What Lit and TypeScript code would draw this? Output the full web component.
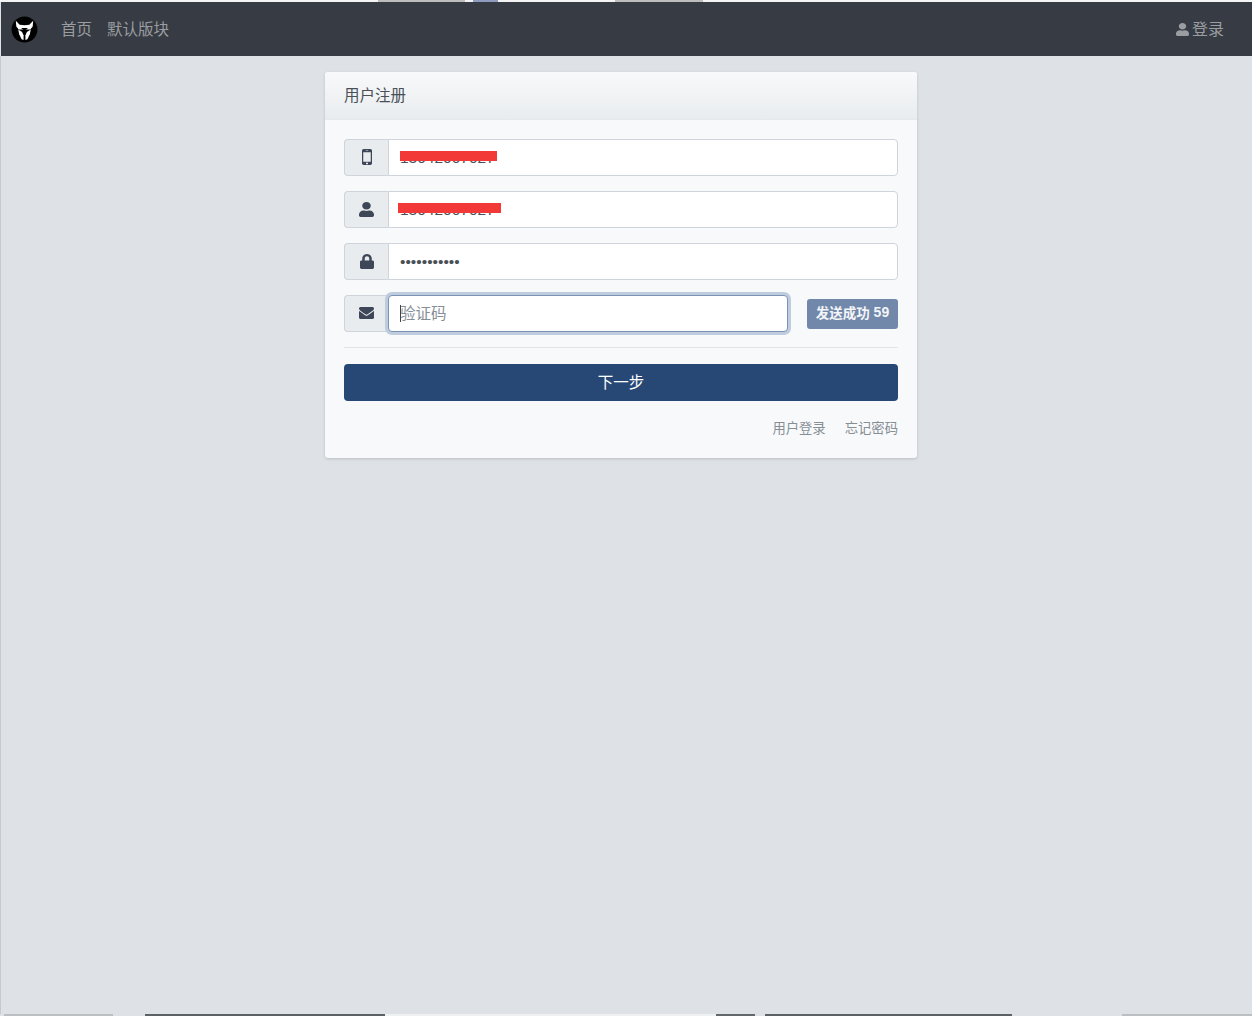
import { LitElement, html, css, svg } from "lit";
import { customElement } from "lit/decorators.js";

const USER = "M224 256c70.7 0 128-57.3 128-128S294.7 0 224 0 96 57.3 96 128s57.3 128 128 128zm89.6 32h-16.7c-22.2 10.2-46.9 16-72.9 16s-50.6-5.8-72.9-16h-16.7C60.2 288 0 348.2 0 422.4V464c0 26.5 21.5 48 48 48h352c26.5 0 48-21.5 48-48v-41.6c0-74.2-60.2-134.4-134.4-134.4z";
const LOCK = "M400 224h-24v-72C376 68.2 307.8 0 224 0S72 68.2 72 152v72H48c-26.5 0-48 21.5-48 48v192c0 26.5 21.5 48 48 48h352c26.5 0 48-21.5 48-48V272c0-26.5-21.5-48-48-48zm-104 0H152v-72c0-39.7 32.3-72 72-72s72 32.3 72 72v72z";
const MOBILE = "M976 1408q0-33-23.5-56.5t-56.5-23.5-56.5 23.5-23.5 56.5 23.5 56.5 56.5 23.5 56.5-23.5 23.5-56.5zm208-160v-704q0-13-9.5-22.5t-22.5-9.5h-512q-13 0-22.5 9.5t-9.5 22.5v704q0 13 9.5 22.5t22.5 9.5h512q13 0 22.5-9.5t9.5-22.5zm-192-848q0-16-16-16h-160q-16 0-16 16t16 16h160q16 0 16-16zm288-16v1024q0 52-38 90t-90 38h-512q-52 0-90-38t-38-90v-1024q0-52 38-90t90-38h512q52 0 90 38t38 90z";
const ENVELOPE = "M1792 710v794q0 66-47 113t-113 47h-1472q-66 0-113-47t-47-113v-794q44 49 101 87 362 246 497 345 57 42 92.5 65.5t94.5 48 110 24.5h2q51 0 110-24.5t94.5-48 92.5-65.5q170-123 498-345 57-39 100-87zm0-294q0 79-49 151t-122 123q-376 261-468 325-10 7-42.5 30.5t-54 38-52 32.5-57.5 27-50 9h-2q-23 0-50-9t-57.5-27-52-32.5-54-38-42.5-30.5q-91-64-262-182.5t-205-142.5q-62-42-117-115.5t-55-136.5q0-78 41.5-130t118.5-52h1472q65 0 112.5 45t47.5 115z";

const icon = (box: string, d: string, w: number, h: number) =>
  html`<svg class="ic" width=${w} height=${h} viewBox=${box} preserveAspectRatio="none" fill="currentColor"><path d=${d}></path></svg>`;

const TOP: [number, string][] = [[378, "#f4f4f4"], [87, "#bdbdbd"], [8, "#f4f4f4"], [25, "#8f9cc0"], [117, "#f4f4f4"], [88, "#bdbdbd"], [549, "#f4f4f4"]];
const BOTTOM: [number, string][] = [[4, "#dee2e6"], [109, "#bcbfc2"], [32, "#dee2e6"], [240, "#5c6165"], [331, "#eef0f2"], [39, "#62676b"], [10, "#dee2e6"], [247, "#5c6165"], [110, "#dee2e6"], [130, "#bcbfc2"]];

@customElement("app-root")
export class AppRoot extends LitElement {
  static styles = css`
    :host {
      display: flex;
      flex-direction: column;
      height: 1016px;
      overflow: hidden;
      background: #dee2e6;
      font-family: "Liberation Sans", "Noto Sans CJK SC", sans-serif;
      font-size: 15.5px;
      color: #495057;
    }
    .strip { display: flex; height: 2px; flex: none; }
    .strip i { display: block; height: 100%; }
    .nav {
      flex: none;
      height: 54px;
      box-sizing: border-box;
      margin-left: 1px;
      background: #373b43;
      display: flex;
      align-items: center;
      padding: 0 28px 2px 10px;
      color: #9a9da1;
    }
    .logo { flex: none; margin: 2px 23px 0 0; }
    .nav a { margin-right: 15px; }
    .nav .sp { flex: 1; }
    .login { display: flex; align-items: center; gap: 3px; font-size: 16px; }
    .login svg { margin-top: 2px; }
    .login a { margin: 0; }
    .main {
      flex: 1;
      border-left: 1px solid #c6cacf;
      padding: 16px 0 0 324px;
    }
    .card {
      width: 592px;
      height: 386px;
      box-sizing: border-box;
      background: #f8f9fa;
      border-radius: 3px;
      box-shadow: 0 1px 3px rgba(0, 0, 0, 0.16);
    }
    .head {
      height: 48px;
      box-sizing: border-box;
      padding: 0 19px 3px;
      display: flex;
      align-items: center;
      background: linear-gradient(#f8f9fa, #e9ecef);
      border-bottom: 1px solid #e6e9ec;
      border-radius: 3px 3px 0 0;
      color: #495057;
    }
    .body {
      padding: 19px 19px 0;
      display: flex;
      flex-direction: column;
      gap: 15px;
    }
    .row { display: flex; height: 37px; align-items: center; }
    .addon {
      width: 44px;
      height: 37px;
      flex: none;
      box-sizing: border-box;
      padding-bottom: 1px;
      border: 1px solid #ced4da;
      border-right: 0;
      border-radius: 4px 0 0 4px;
      background: #e9ecef;
      color: #3e4757;
      display: flex;
      align-items: center;
      justify-content: center;
    }
    .field { position: relative; flex: 1; height: 37px; }
    input {
      width: 100%;
      height: 37px;
      box-sizing: border-box;
      margin: 0;
      padding: 0 11px;
      border: 1px solid #ced4da;
      border-radius: 0 4px 4px 0;
      background: #fff;
      color: #495057;
      font: inherit;
      outline: none;
      display: block;
    }
    input::placeholder { color: #868e96; opacity: 1; }
    .focus { flex: none; width: 400px; }
    .focus input {
      border-color: #7a92b6;
      border-radius: 4px;
      box-shadow: 0 0 0 3px #bfccdd;
    }
    .caret {
      position: absolute;
      left: 12px;
      top: 10px;
      width: 1px;
      height: 17px;
      background: #3c4450;
    }
    .mark {
      position: absolute;
      height: 10px;
      background: #f33838;
    }
    .m1 { left: 12px; top: 12px; width: 97px; }
    .m2 { left: 10px; top: 12px; width: 103px; }
    .send {
      margin: 1px 0 0 19px;
      width: 91px;
      height: 30px;
      box-sizing: border-box;
      padding-bottom: 5px;
      flex: none;
      border-radius: 3px;
      background: #7188aa;
      color: #f3f5f8;
      font-size: 13.5px;
      font-weight: 700;
      display: flex;
      align-items: center;
      justify-content: center;
      white-space: pre;
    }
    .send b { font-size: 14px; }
    hr { margin: 0 0 1px; border: 0; border-top: 1px solid #e1e4e8; }
    .next {
      height: 37px;
      box-sizing: border-box;
      padding-bottom: 4px;
      border-radius: 4px;
      background: #274875;
      color: #fff;
      display: flex;
      align-items: center;
      justify-content: center;
    }
    .links {
      display: flex;
      justify-content: flex-end;
      gap: 19px;
      margin-top: 2px;
      font-size: 13.33px;
      color: #868e96;
    }
  `;

  render() {
    const seg = (s: [number, string][]) =>
      s.map(([w, c]) => html`<i style="width:${w}px;background:${c}"></i>`);
    return html`
      <div class="strip">${seg(TOP)}</div>
      <div class="nav">
        <svg class="logo" width="27" height="27" viewBox="0 0 28 28">
          <circle cx="14" cy="14" r="13.4" fill="#000"></circle>
          ${svg`<path fill="#fff" d="M5 5 L9 9 Q14 10 19 9 L23 5 L22.5 11 L20 14 L8 14 L5.5 11 Z"></path>
          <path fill="#fff" d="M7.5 14 L11.5 16.5 L13 20 L13 25 L11 24 L8.5 19 Z"></path>
          <path fill="#fff" d="M20.5 14 L16.5 16.5 L15 20 L15 25 L17 24 L19.5 19 Z"></path>
          <path fill="#000" d="M10.5 12.5 L17.5 12.5 L14 15.5 Z"></path>`}
        </svg>
        <a>首页</a>
        <a>默认版块</a>
        <span class="sp"></span>
        <span class="login">${icon("0 0 448 512", USER, 13, 13)}<a>登录</a></span>
      </div>
      <div class="main">
        <div class="card">
          <div class="head">用户注册</div>
          <div class="body">
            <div class="row">
              <span class="addon">${icon("512 256 768 1280", MOBILE, 10, 16)}</span>
              <div class="field"><input value="13042007027" /><span class="mark m1"></span></div>
            </div>
            <div class="row">
              <span class="addon">${icon("0 0 448 512", USER, 15, 15)}</span>
              <div class="field"><input value="13042007027" /><span class="mark m2"></span></div>
            </div>
            <div class="row">
              <span class="addon">${icon("0 0 448 512", LOCK, 14, 15)}</span>
              <div class="field"><input type="password" value="12345678901" /></div>
            </div>
            <div class="row">
              <span class="addon">${icon("0 256 1792 1408", ENVELOPE, 15, 12)}</span>
              <div class="field focus"><input placeholder="验证码" /><span class="caret"></span></div>
              <span class="send">发送成功 <b>59</b></span>
            </div>
            <hr />
            <div class="next">下一步</div>
            <div class="links"><a>用户登录</a><a>忘记密码</a></div>
          </div>
        </div>
      </div>
      <div class="strip">${seg(BOTTOM)}</div>
    `;
  }
}
